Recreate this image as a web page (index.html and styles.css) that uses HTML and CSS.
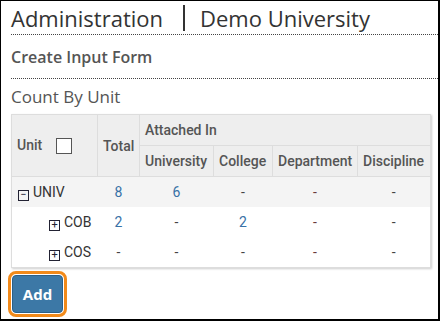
FILE: index.html
```html
<!DOCTYPE html>
<html lang="en">

<head>
    <meta charset="UTF-8">
    <meta name="viewport" content="width=device-width, initial-scale=1.0">
    <link rel="stylesheet" href="styles.css">
    <title>Count By Unit</title>
</head>

<body>
    <div class="frame">
        <h1 class="page-title">
            <span>Administration</span>
            <span class="title-sep"></span>
            <span>Demo University</span>
        </h1>
        <h2 class="section-title">Create Input Form</h2>
        <h3 class="sub-title">Count By Unit</h3>

        <table class="count-table">
            <colgroup>
                <col style="width: 86px">
                <col style="width: 42px">
                <col style="width: 74px">
                <col style="width: 59px">
                <col style="width: 85px">
                <col style="width: 73px">
            </colgroup>
            <thead>
                <tr>
                    <th rowspan="2" class="unit-head">
                        Unit <span class="check"></span>
                    </th>
                    <th rowspan="2" class="total-head">Total</th>
                    <th colspan="4" class="group-head">Attached In</th>
                </tr>
                <tr>
                    <th>University</th>
                    <th>College</th>
                    <th>Department</th>
                    <th>Discipline</th>
                </tr>
            </thead>
            <tbody>
                <tr class="row-top">
                    <td class="unit"><span class="toggle">&minus;</span>UNIV</td>
                    <td class="num">8</td>
                    <td class="num">6</td>
                    <td class="dash">-</td>
                    <td class="dash dept">-</td>
                    <td class="dash">-</td>
                </tr>
                <tr>
                    <td class="unit child"><span class="toggle">+</span>COB</td>
                    <td class="num">2</td>
                    <td class="dash">-</td>
                    <td class="num">2</td>
                    <td class="dash dept">-</td>
                    <td class="dash">-</td>
                </tr>
                <tr>
                    <td class="unit child"><span class="toggle">+</span>COS</td>
                    <td class="dash">-</td>
                    <td class="dash">-</td>
                    <td class="dash">-</td>
                    <td class="dash dept">-</td>
                    <td class="dash">-</td>
                </tr>
            </tbody>
        </table>

        <button class="btn-add">Add</button>
    </div>
</body>

</html>
```

FILE: styles.css
```css
html,
body {
    margin: 0;
    background: #fff;
}

.frame {
    box-sizing: border-box;
    width: 440px;
    height: 321px;
    border-top: 1px solid #000;
    border-left: 1px solid #000;
    border-right: 2px solid #000;
    border-bottom: 2px solid #000;
    padding-left: 10px;
    overflow: hidden;
    font-family: "Open Sans", sans-serif;
}

.page-title {
    display: flex;
    align-items: center;
    margin: 0;
    height: 32px;
    padding-top: 1px;
    font-size: 22px;
    font-weight: 400;
    color: #333;
    border-bottom: 1px dotted #444;
}

.title-sep {
    display: inline-block;
    width: 2px;
    height: 26px;
    background: #333;
    margin: 0 15px 0 20px;
}

.section-title {
    margin: 0;
    height: 43px;
    display: flex;
    align-items: center;
    font-size: 16px;
    font-weight: 600;
    color: #555;
    border-bottom: 1px dotted #444;
}

.sub-title {
    margin: 0;
    height: 35px;
    display: flex;
    align-items: center;
    font-size: 17px;
    font-weight: 400;
    color: #555;
}

.count-table {
    border-collapse: collapse;
    table-layout: fixed;
    width: 419px;
    font-family: Roboto, sans-serif;
    font-size: 14px;
    color: #444;
    box-shadow: 1px 1px 2px rgba(0, 0, 0, 0.2);
}

.count-table th {
    background: #eee;
    border: 1px solid #ddd;
    font-weight: 500;
    color: #555;
    height: 30px;
    padding: 0 5px;
    text-align: left;
    white-space: nowrap;
}

.unit-head {
    padding-left: 6px;
}

.check {
    display: inline-block;
    box-sizing: border-box;
    width: 16px;
    height: 16px;
    border: 1px solid #555;
    vertical-align: middle;
    margin-left: 10px;
    background: #fff;
}

.count-table td {
    height: 30px;
    padding: 0;
    text-align: center;
}

.count-table tbody tr:last-child td {
    border-bottom: 1px solid #ddd;
}

.count-table tbody td:first-child {
    border-left: 1px solid #ddd;
}

.count-table tbody td:last-child {
    border-right: 1px solid #ddd;
}

.row-top td {
    background: #f4f4f4;
}

.count-table td.unit {
    text-align: left;
    padding-left: 6px;
    font-size: 14px;
    color: #333;
}

.count-table td.child {
    padding-left: 37px;
}

.toggle {
    display: inline-block;
    box-sizing: border-box;
    width: 11px;
    height: 11px;
    border: 1px solid #223;
    font-size: 11px;
    line-height: 8px;
    text-align: center;
    vertical-align: -1px;
    margin-right: 4px;
    color: #223;
}

.num {
    color: #3871a6;
}

.dash {
    color: #444;
}

.dept {
    color: #6a3b3b;
}

.btn-add {
    margin-top: 7px;
    margin-left: 1px;
    width: 51px;
    height: 38px;
    background: #3c78a6;
    border: 1px solid #2c6088;
    border-radius: 4px;
    color: #fff;
    font-family: "Open Sans", sans-serif;
    font-weight: 700;
    font-size: 15px;
    outline: 3px solid #f28a1a;
    outline-offset: 1px;
}
```
